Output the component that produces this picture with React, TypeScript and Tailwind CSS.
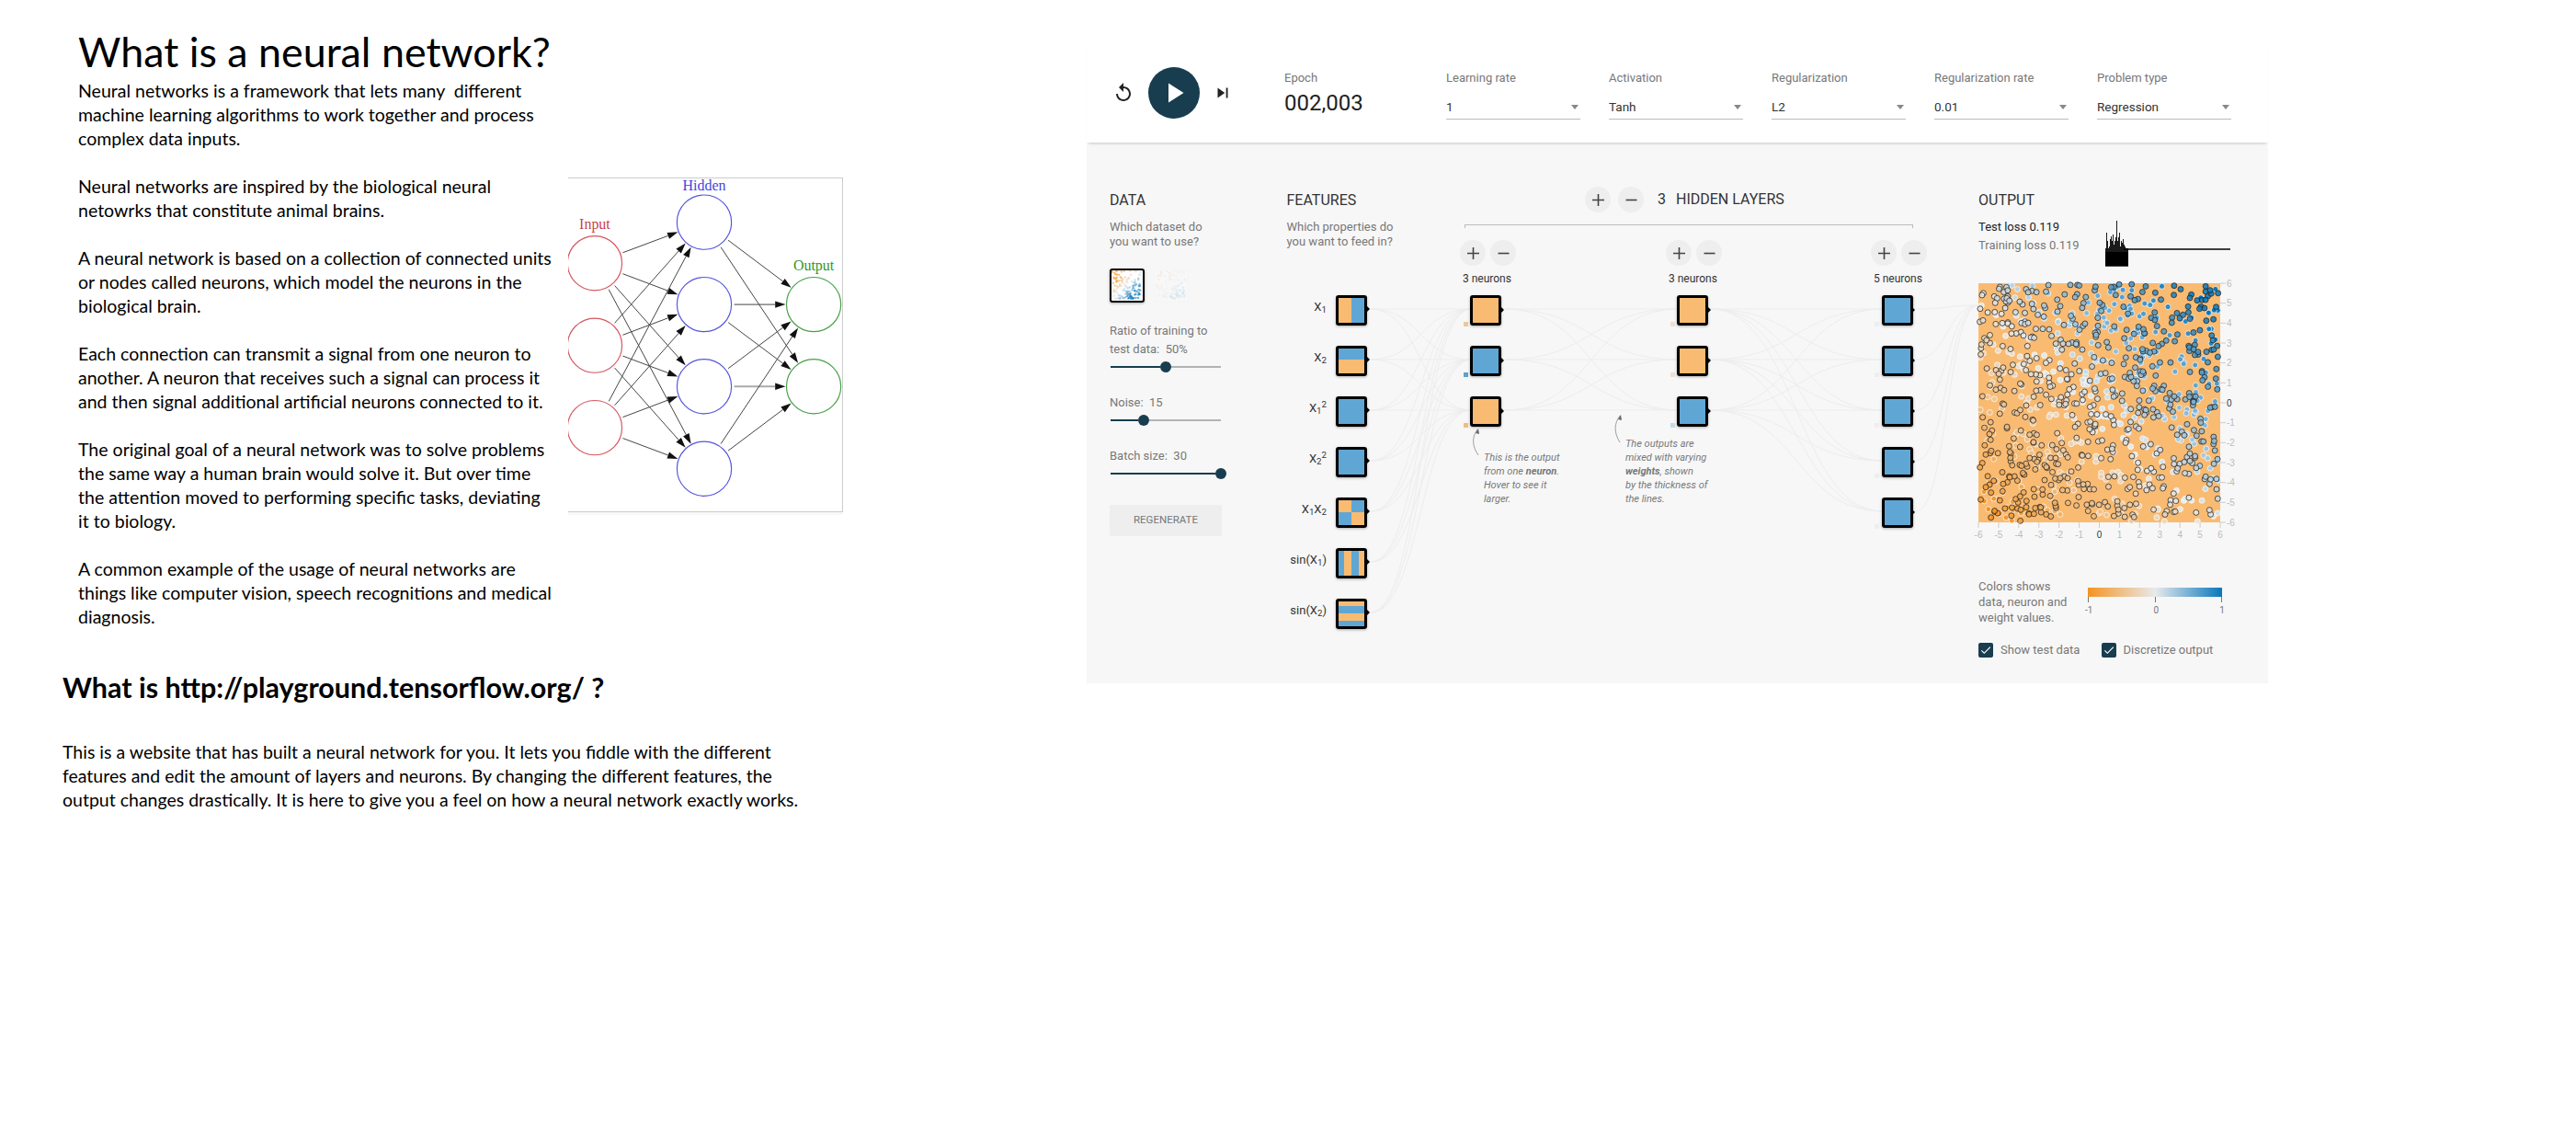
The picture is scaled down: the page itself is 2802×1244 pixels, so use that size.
import React from "react";
import { MdReplay, MdPlayArrow, MdSkipNext, MdCheck } from "react-icons/md";

function rng(seed: number) {
  let a = seed;
  return () => {
    a |= 0; a = (a + 0x6d2b79f5) | 0;
    let t = Math.imul(a ^ (a >>> 15), 1 | a);
    t = (t + Math.imul(t ^ (t >>> 7), 61 | t)) ^ t;
    return ((t ^ (t >>> 14)) >>> 0) / 4294967296;
  };
}
function mix(a: number[], b: number[], t: number) {
  return `rgb(${a.map((v, i) => Math.round(v + (b[i] - v) * t)).join(",")})`;
}
function valueColor(v: number) {
  const o = [245, 147, 34], m = [232, 234, 235], b = [8, 119, 189];
  return v < 0 ? mix(m, o, Math.min(1, -v)) : mix(m, b, Math.min(1, v));
}

const BODY = [
  ["Neural networks is a framework that lets many  different", "machine learning algorithms to work together and process", "complex data inputs."],
  ["Neural networks are inspired by the biological neural", "netowrks that constitute animal brains."],
  ["A neural network is based on a collection of connected units", "or nodes called neurons, which model the neurons in the", "biological brain."],
  ["Each connection can transmit a signal from one neuron to", "another. A neuron that receives such a signal can process it", "and then signal additional artificial neurons connected to it."],
  ["The original goal of a neural network was to solve problems", "the same way a human brain would solve it. But over time", "the attention moved to performing specific tasks, deviating", "it to biology."],
  ["A common example of the usage of neural networks are", "things like computer vision, speech recognitions and medical", "diagnosis."],
];

function NeuralDiagram() {
  const inp = [346, 615, 884].map((y) => [141, y]);
  const hid = [212, 481, 749, 1018].map((y) => [499, y]);
  const out = [481, 749].map((y) => [857, y]);
  const pairs: number[][][] = [];
  inp.forEach((a) => hid.forEach((b) => pairs.push([a, b])));
  hid.forEach((a) => out.forEach((b) => pairs.push([a, b])));
  return (
    <svg width="299" height="362" viewBox="54 70 899 1086" className="block">
      {pairs.map(([a, b], i) => {
        const dx = b[0] - a[0], dy = b[1] - a[1], l = Math.hypot(dx, dy);
        const ux = dx / l, uy = dy / l;
        const sx = a[0] + ux * 98, sy = a[1] + uy * 98;
        const ex = b[0] - ux * 92, ey = b[1] - uy * 92;
        const bx = ex - ux * 34, by = ey - uy * 34;
        const thick = a[1] === 749 && b[1] === 749;
        return (
          <g key={i}>
            <line x1={sx} y1={sy} x2={bx} y2={by} stroke={thick ? "#aaa" : "#444"} strokeWidth={thick ? 6 : 3} />
            <polygon points={`${ex},${ey} ${bx - uy * 11},${by + ux * 11} ${bx + uy * 11},${by - ux * 11}`} fill="#111" />
          </g>
        );
      })}
      {inp.map((c, i) => <circle key={i} cx={c[0]} cy={c[1]} r="89" fill="none" stroke="#d5555f" strokeWidth="3.5" />)}
      {hid.map((c, i) => <circle key={i} cx={c[0]} cy={c[1]} r="89" fill="none" stroke="#5555dd" strokeWidth="3.5" />)}
      {out.map((c, i) => <circle key={i} cx={c[0]} cy={c[1]} r="89" fill="none" stroke="#45a045" strokeWidth="3.5" />)}
      <text x="141" y="234" textAnchor="middle" fontSize="48" fill="#c8434d" fontFamily="'Liberation Serif',serif">Input</text>
      <text x="499" y="109" textAnchor="middle" fontSize="48" fill="#4444dd" fontFamily="'Liberation Serif',serif">Hidden</text>
      <text x="857" y="369" textAnchor="middle" fontSize="48" fill="#2f962f" fontFamily="'Liberation Serif',serif">Output</text>
    </svg>
  );
}

function LeftColumn() {
  return (
    <div className="w-[1182px] shrink-0 font-[Lato,sans-serif] text-black">
      <div className="flex">
        <div className="ml-[85px] w-[533px] shrink-0 pt-[26px]">
          <h1 className="h-[60px] whitespace-nowrap text-[44.8px] leading-[60px] font-normal">What is a neural network?</h1>
          <div className="flex flex-col gap-[26px] text-[19.55px] leading-[26px]">
            {BODY.map((p, i) => (
              <p key={i}>{p.map((l, j) => <span key={j} className="block whitespace-pre">{l}</span>)}</p>
            ))}
          </div>
        </div>
        <div className="mt-[193px] h-[367px] w-[299px] shrink-0 bg-[#f7f8fa]">
          <div className="border-y border-r border-[#ccc] bg-white"><NeuralDiagram /></div>
        </div>
      </div>
      <div className="pl-[68px]">
        <h2 className="mt-[48px] h-[30px] whitespace-nowrap text-[30.5px] leading-[30px] font-bold">What is http://playground.tensorflow.org/ ?</h2>
        <div className="mt-[43px] text-[19.5px] leading-[26px]">
          <span className="block whitespace-nowrap">This is a website that has built a neural network for you. It lets you fiddle with the different</span>
          <span className="block whitespace-nowrap">features and edit the amount of layers and neurons. By changing the different features, the</span>
          <span className="block whitespace-nowrap">output changes drastically. It is here to give you a feel on how a neural network exactly works.</span>
        </div>
      </div>
    </div>
  );
}

function Select({ label, value }: { label: string; value: string }) {
  return (
    <div className="w-[146px] shrink-0">
      <div className="h-[16px] text-[13px] leading-[16px] text-[#777]">{label}</div>
      <div className="mt-[13px] flex h-[24px] items-start justify-between border-b border-[#bbb] pr-[2px]">
        <span className="text-[13.5px] leading-[20px] text-[#333]">{value}</span>
        <span className="mt-[8px] h-0 w-0 border-x-[4px] border-t-[5px] border-x-transparent border-t-[#888]" />
      </div>
    </div>
  );
}

function Header() {
  return (
    <div className="relative z-20 flex h-[105px] bg-white shadow-[0_3px_3px_-2px_rgba(0,0,0,0.2)]">
      <div className="mt-[23px] flex h-[56px] w-[215px] shrink-0 items-center pl-[29.5px]">
        <MdReplay size={24} className="-mx-[1.5px] shrink-0 text-[#222]" />
        <div className="ml-[16.5px] flex h-[56px] w-[56px] shrink-0 items-center justify-center rounded-full bg-[#183d4e]">
          <MdPlayArrow size={36} className="text-white" />
        </div>
        <MdSkipNext size={22} className="ml-[14px] shrink-0 text-[#222]" />
      </div>
      <div className="w-[176px] shrink-0 pt-[27px]">
        <div className="h-[16px] text-[13px] leading-[16px] text-[#777]">Epoch</div>
        <div className="mt-[5px] text-[24px] leading-[28px] text-[#222]">002,003</div>
      </div>
      <div className="flex gap-[31px] pt-[27px]">
        <Select label="Learning rate" value="1" />
        <Select label="Activation" value="Tanh" />
        <Select label="Regularization" value="L2" />
        <Select label="Regularization rate" value="0.01" />
        <Select label="Problem type" value="Regression" />
      </div>
    </div>
  );
}

function Slider({ dark, width = 120 }: { dark: number; width?: number }) {
  return (
    <div className="mt-[3px] ml-px flex h-[12px] items-center" style={{ width }}>
      <div className="h-[2px] bg-[#183d4e]" style={{ width: dark }} />
      <div className="h-[12px] w-[12px] shrink-0 rounded-full bg-[#183d4e]" />
      <div className="h-[2px] flex-1 bg-[#b3b3b3]" />
    </div>
  );
}

function DatasetThumb({ active }: { active: boolean }) {
  const r = rng(active ? 7 : 9);
  const pts = Array.from({ length: 130 }, () => {
    const x = r() * 32, y = r() * 31;
    return [x, y, (x + y - 31) / 18];
  });
  return (
    <div className={active ? "h-[37px] w-[38px] rounded-[3px] border-[2.5px] border-black bg-white shadow-[0_1px_3px_rgba(0,0,0,0.3)]" : "h-[37px] w-[38px] rounded-[3px] border-2 border-[#f2f2f2] bg-white opacity-15"}>
      <svg width="33" height="32" viewBox="0 0 33 32" className="block">
        {pts.map((p, i) => <circle key={i} cx={p[0]} cy={p[1]} r="1.2" fill={valueColor(p[2])} fillOpacity="0.6" />)}
      </svg>
    </div>
  );
}

function DataColumn() {
  return (
    <div className="w-[192.5px] shrink-0 pt-[5px]">
      <div className="text-[16px] leading-[20px] text-[#333]">DATA</div>
      <div className="mt-[10.5px] text-[13px] leading-[16.5px] text-[#777]">Which dataset do<br />you want to use?</div>
      <div className="mt-[20px] flex gap-[10px]">
        <DatasetThumb active />
        <DatasetThumb active={false} />
      </div>
      <div className="mt-[21px] text-[13px] leading-[20px] text-[#777]">
        <div>Ratio of training to</div>
        <div className="whitespace-pre">test data:  50%</div>
      </div>
      <Slider dark={54} />
      <div className="mt-[23px] whitespace-pre text-[13px] leading-[20px] text-[#777]">Noise:  15</div>
      <Slider dark={30} />
      <div className="mt-[23px] whitespace-pre text-[13px] leading-[20px] text-[#777]">Batch size:  30</div>
      <Slider dark={114} width={126} />
      <div className="mt-[28px] flex h-[34px] w-[122px] items-center justify-center rounded-[2px] bg-[#eee] text-[11.5px] text-[#777]">REGENERATE</div>
    </div>
  );
}

const O = "#f9bb72", B = "#60a6d5";

function Heat({ kind }: { kind: string }) {
  const strip = (cls: string, items: [string, number][]) => (
    <div className={`flex h-full w-full ${cls}`}>
      {items.map(([c, f], i) => <div key={i} style={{ background: c, flex: f }} />)}
    </div>
  );
  if (kind === "O") return <div className="h-full w-full bg-[#f9bb72]" />;
  if (kind === "B") return <div className="h-full w-full bg-[#60a6d5]" />;
  if (kind === "x1") return strip("flex-row", [[O, 50], [B, 50]]);
  if (kind === "x2") return strip("flex-col", [[B, 47], [O, 53]]);
  if (kind === "sx") return strip("flex-row", [[B, 21], [O, 25], [B, 27], [O, 19]]);
  if (kind === "sy") return strip("flex-col", [[O, 20], [B, 26], [O, 26], [B, 19]]);
  return (
    <div className="grid h-full w-full grid-cols-2 grid-rows-2">
      <div className="bg-[#f9bb72]" /><div className="bg-[#60a6d5]" />
      <div className="bg-[#60a6d5]" /><div className="bg-[#f9bb72]" />
    </div>
  );
}

function Node({ kind, bias }: { kind: string; bias?: string }) {
  return (
    <div className="relative h-[33px] w-[34px] shrink-0 rounded-[3px] border-[3px] border-black shadow-[0_1px_3px_rgba(0,0,0,0.3)]">
      <div className="h-full w-full overflow-hidden"><Heat kind={kind} /></div>
      <span className="absolute top-[7.5px] left-[28.5px] h-0 w-0 border-y-[5px] border-l-[5px] border-y-transparent border-l-black" />
      {bias && <span className="absolute top-[25.5px] -left-[10.5px] h-[5px] w-[5px]" style={{ background: bias }} />}
    </div>
  );
}

const FEATURES: [React.ReactNode, string][] = [
  [<>X<sub>1</sub></>, "x1"],
  [<>X<sub>2</sub></>, "x2"],
  [<>X<sub>1</sub><sup>2</sup></>, "B"],
  [<>X<sub>2</sub><sup>2</sup></>, "B"],
  [<>X<sub>1</sub>X<sub>2</sub></>, "xy"],
  [<>sin(X<sub>1</sub>)</>, "sx"],
  [<>sin(X<sub>2</sub>)</>, "sy"],
];

function FeatureColumn() {
  return (
    <div className="relative z-10 w-[188.5px] shrink-0 pt-[5px]">
      <div className="text-[16px] leading-[20px] text-[#333]">FEATURES</div>
      <div className="mt-[10.5px] text-[13px] leading-[16.5px] text-[#777]">Which properties do<br />you want to feed in?</div>
      <div className="mt-[49px] flex flex-col gap-[22px]">
        {FEATURES.map(([l, k], i) => (
          <div key={i} className="flex h-[33px] w-[87.5px] items-center justify-end gap-[10px]">
            <span className="pb-[6px] text-[13px] leading-[20px] whitespace-nowrap text-[#333]">{l}</span>
            <Node kind={k} />
          </div>
        ))}
      </div>
    </div>
  );
}

function RoundBtn({ sign }: { sign: string }) {
  return (
    <div className="flex h-[28px] w-[28px] shrink-0 items-center justify-center rounded-full bg-[#eee] text-[#444]">
      <svg width="13" height="13" viewBox="0 0 13 13">
        <path d={sign === "+" ? "M0 6.5H13M6.5 0V13" : "M0.5 6.5H12.5"} stroke="#444" strokeWidth="1.6" />
      </svg>
    </div>
  );
}

function LayerColumn({ width, label, nodes, nodeLeft }: { width: number; label: string; nodes: [string, string][]; nodeLeft: number }) {
  return (
    <div className="shrink-0" style={{ width }}>
      <div className="flex gap-[5px]"><RoundBtn sign="+" /><RoundBtn sign="-" /></div>
      <div className="mt-[7px] ml-[3px] text-[12px] leading-[14px] text-[#333]">{label}</div>
      <div className="mt-[11px] flex flex-col gap-[22px]" style={{ marginLeft: nodeLeft }}>
        {nodes.map(([k, b], i) => <Node key={i} kind={k} bias={b} />)}
      </div>
    </div>
  );
}

function Layers() {
  return (
    <div className="relative z-10 w-[564px] shrink-0">
      <div className="flex h-[28px] items-center pl-[136px]">
        <RoundBtn sign="+" />
        <div className="ml-[8px]"><RoundBtn sign="-" /></div>
        <span className="ml-[15px] text-[16px] leading-[20px] text-[#333]">3</span>
        <span className="ml-[11px] text-[16px] leading-[20px] text-[#333]">HIDDEN LAYERS</span>
      </div>
      <div className="mt-[13px] ml-[5px] flex h-[4px] w-[488px] justify-between border-t border-[#bbb]">
        <div className="h-full w-px bg-[#bbb]" />
        <div className="h-full w-px bg-[#bbb]" />
      </div>
      <div className="mt-[13px] flex">
        <LayerColumn width={224} label="3 neurons" nodeLeft={11.4} nodes={[["O", "#ecc79a"], ["B", "#5ea0cf"], ["O", "#eebd80"]]} />
        <LayerColumn width={223} label="3 neurons" nodeLeft={12} nodes={[["O", "#eee0d2"], ["O", "#eee0d2"], ["B", "#c5dbe9"]]} />
        <LayerColumn width={117} label="5 neurons" nodeLeft={11.7} nodes={[["B", "#eeeeee"], ["B", "#eeeeee"], ["B", "#eeeeee"], ["B", "#eeeeee"], ["B", "#eeeeee"]]} />
      </div>
    </div>
  );
}

function Links() {
  const ys = (n: number) => Array.from({ length: n }, (_, i) => 336 + 55 * i);
  const d = (x1: number, y1: number, x2: number, y2: number) => {
    const m = (x1 + x2) / 2;
    return `M${x1} ${y1}C${m} ${y1} ${m} ${y2} ${x2} ${y2}`;
  };
  const paths: string[] = [];
  ys(7).forEach((a) => ys(3).forEach((b) => paths.push(d(1491, a, 1600, b))));
  ys(3).forEach((a) => ys(3).forEach((b) => paths.push(d(1637, a, 1825, b))));
  ys(3).forEach((a) => ys(5).forEach((b) => paths.push(d(1860, a, 2048, b))));
  ys(5).forEach((a) => paths.push(d(2084, a, 2152, 332)));
  return (
    <svg className="absolute top-0 left-0 z-0 h-full w-full" viewBox="1182 155 1285 588" preserveAspectRatio="none">
      {paths.map((p, i) => <path key={i} d={p} fill="none" stroke="#ecedee" strokeWidth="1" />)}
      <path d="M1608 495C1601 485 1601 475 1607 467" fill="none" stroke="#888" strokeWidth="0.8" />
      <path d="M1605 471L1608 466L1609 472Z" fill="#666" />
      <path d="M1762 481C1755 470 1756 460 1762 452" fill="none" stroke="#888" strokeWidth="0.8" />
      <path d="M1760 456L1763 451L1764 457Z" fill="#666" />
    </svg>
  );
}

function LossChart() {
  const tops = [270, 253, 262, 270, 268, 260, 257, 262, 255, 266, 262, 258, 240, 262, 258, 253, 268, 262, 264, 260, 266, 268, 270, 270, 270];
  return (
    <svg width="136" height="50" viewBox="2290 240 136 50" className="mt-[3px] block shrink-0">
      <path d={tops.map((t, i) => `M${2290.5 + i} 289.5V${t}`).join("")} stroke="#000" strokeWidth="0.9" fill="none" />
      <rect x="2290" y="274" width="25" height="15.5" fill="#000" />
      <line x1="2310" y1="271" x2="2426" y2="271" stroke="#000" strokeWidth="1.6" />
    </svg>
  );
}

function Scatter() {
  const L = 2152, R = 2415, T = 308, Bm = 568;
  const sx = (v: number) => L + ((v + 6) / 12) * (R - L);
  const sy = (v: number) => T + ((6 - v) / 12) * (Bm - T);
  const r = rng(42);
  const train = Array.from({ length: 360 }, () => [r() * 11.9 - 5.95, r() * 11.9 - 5.95]);
  const test = Array.from({ length: 620 }, () => [r() * 11.9 - 5.95, r() * 11.9 - 5.95]);
  const ticks = [-6, -5, -4, -3, -2, -1, 0, 1, 2, 3, 4, 5, 6];
  const tf = "'Liberation Sans',Arial,sans-serif";
  const col = (p: number[]) => valueColor((p[0] + p[1]) / 10.5 + 0.05);
  return (
    <svg width="300" height="295" viewBox="2140 300 300 295" className="-ml-[12px] mt-[10px] block">
      <rect x={L} y={T} width={R - L} height={Bm - T} fill="#f9bb72" />
      {train.map((p, i) => <circle key={i} cx={sx(p[0])} cy={sy(p[1])} r="3" fill={col(p)} stroke="#fff" strokeOpacity="0.7" strokeWidth="1" />)}
      {test.map((p, i) => <circle key={i} cx={sx(p[0])} cy={sy(p[1])} r="3" fill={col(p)} fillOpacity="0.85" stroke="#222" strokeOpacity="0.75" strokeWidth="1" />)}
      {ticks.map((t) => (
        <g key={t}>
          <line x1={R} x2={R + 6} y1={sy(t)} y2={sy(t)} stroke="#ccc" />
          <text x={R + 7} y={sy(t) + 3.5} fontSize="10" fontFamily={tf} fill={t === 0 ? "#333" : "#bbb"}>{t}</text>
          <line x1={sx(t)} x2={sx(t)} y1={Bm} y2={Bm + 6} stroke="#ccc" />
          <text x={sx(t)} y={Bm + 17} fontSize="10" textAnchor="middle" fontFamily={tf} fill={t === 0 ? "#333" : "#bbb"}>{t}</text>
        </g>
      ))}
    </svg>
  );
}

function Check({ label, width }: { label: string; width?: number }) {
  return (
    <div className="flex h-[16px] items-center gap-[8px]" style={{ width }}>
      <span className="flex h-[16px] w-[16px] shrink-0 items-center justify-center rounded-[2px] bg-[#183d4e]">
        <MdCheck size={14} className="text-white" />
      </span>
      <span className="text-[13px] whitespace-nowrap text-[#777]">{label}</span>
    </div>
  );
}

function OutputColumn() {
  return (
    <div className="relative z-10 w-[315px] shrink-0 pt-[5px]">
      <div className="text-[16px] leading-[20px] text-[#333]">OUTPUT</div>
      <div className="mt-[9px] flex">
        <div className="w-[138px] shrink-0 text-[13px] leading-[20px]">
          <div className="text-[#222]">Test loss 0.119</div>
          <div className="text-[#777]">Training loss 0.119</div>
        </div>
        <LossChart />
      </div>
      <Scatter />
      <div className="mt-[33.5px] flex">
        <div className="w-[119px] shrink-0 text-[13px] leading-[17px] text-[#777]">Colors shows<br />data, neuron and<br />weight values.</div>
        <div className="mt-[10.5px] w-[146px]">
          <div className="h-[10px] bg-[linear-gradient(to_right,#f59322,#e8eaeb,#0877bd)]" />
          <div className="flex h-[6px] justify-between">
            <div className="w-px bg-[#777]" /><div className="w-px bg-[#777]" /><div className="w-px bg-[#777]" />
          </div>
          <div className="-mx-[3px] mt-[3px] flex justify-between text-[10px] leading-[12px] text-[#777]">
            <span>-1</span><span>0</span><span>1</span>
          </div>
        </div>
      </div>
      <div className="mt-[19.5px] flex">
        <Check label="Show test data" width={133.5} />
        <Check label="Discretize output" />
      </div>
    </div>
  );
}

function Notes() {
  return (
    <>
      <div className="absolute top-[334.5px] left-[432px] z-10 text-[11px] leading-[15px] whitespace-nowrap text-[#777] italic">
        This is the output<br />from one <b>neuron</b>.<br />Hover to see it<br />larger.
      </div>
      <div className="absolute top-[319.5px] left-[586px] z-10 text-[11px] leading-[15px] whitespace-nowrap text-[#777] italic">
        The outputs are<br />mixed with varying<br /><b>weights</b>, shown<br />by the thickness of<br />the lines.
      </div>
    </>
  );
}

function Playground() {
  return (
    <div className="mt-[50px] h-[693px] w-[1285px] shrink-0 font-[Roboto,sans-serif]">
      <Header />
      <div className="relative flex h-[588px] bg-[#f7f7f7] pt-[48px] pl-[25px]">
        <Links />
        <DataColumn />
        <FeatureColumn />
        <Layers />
        <OutputColumn />
        <Notes />
      </div>
    </div>
  );
}

export default function App() {
  return (
    <div className="flex h-[1244px] w-[2802px] overflow-hidden bg-white">
      <LeftColumn />
      <Playground />
    </div>
  );
}
